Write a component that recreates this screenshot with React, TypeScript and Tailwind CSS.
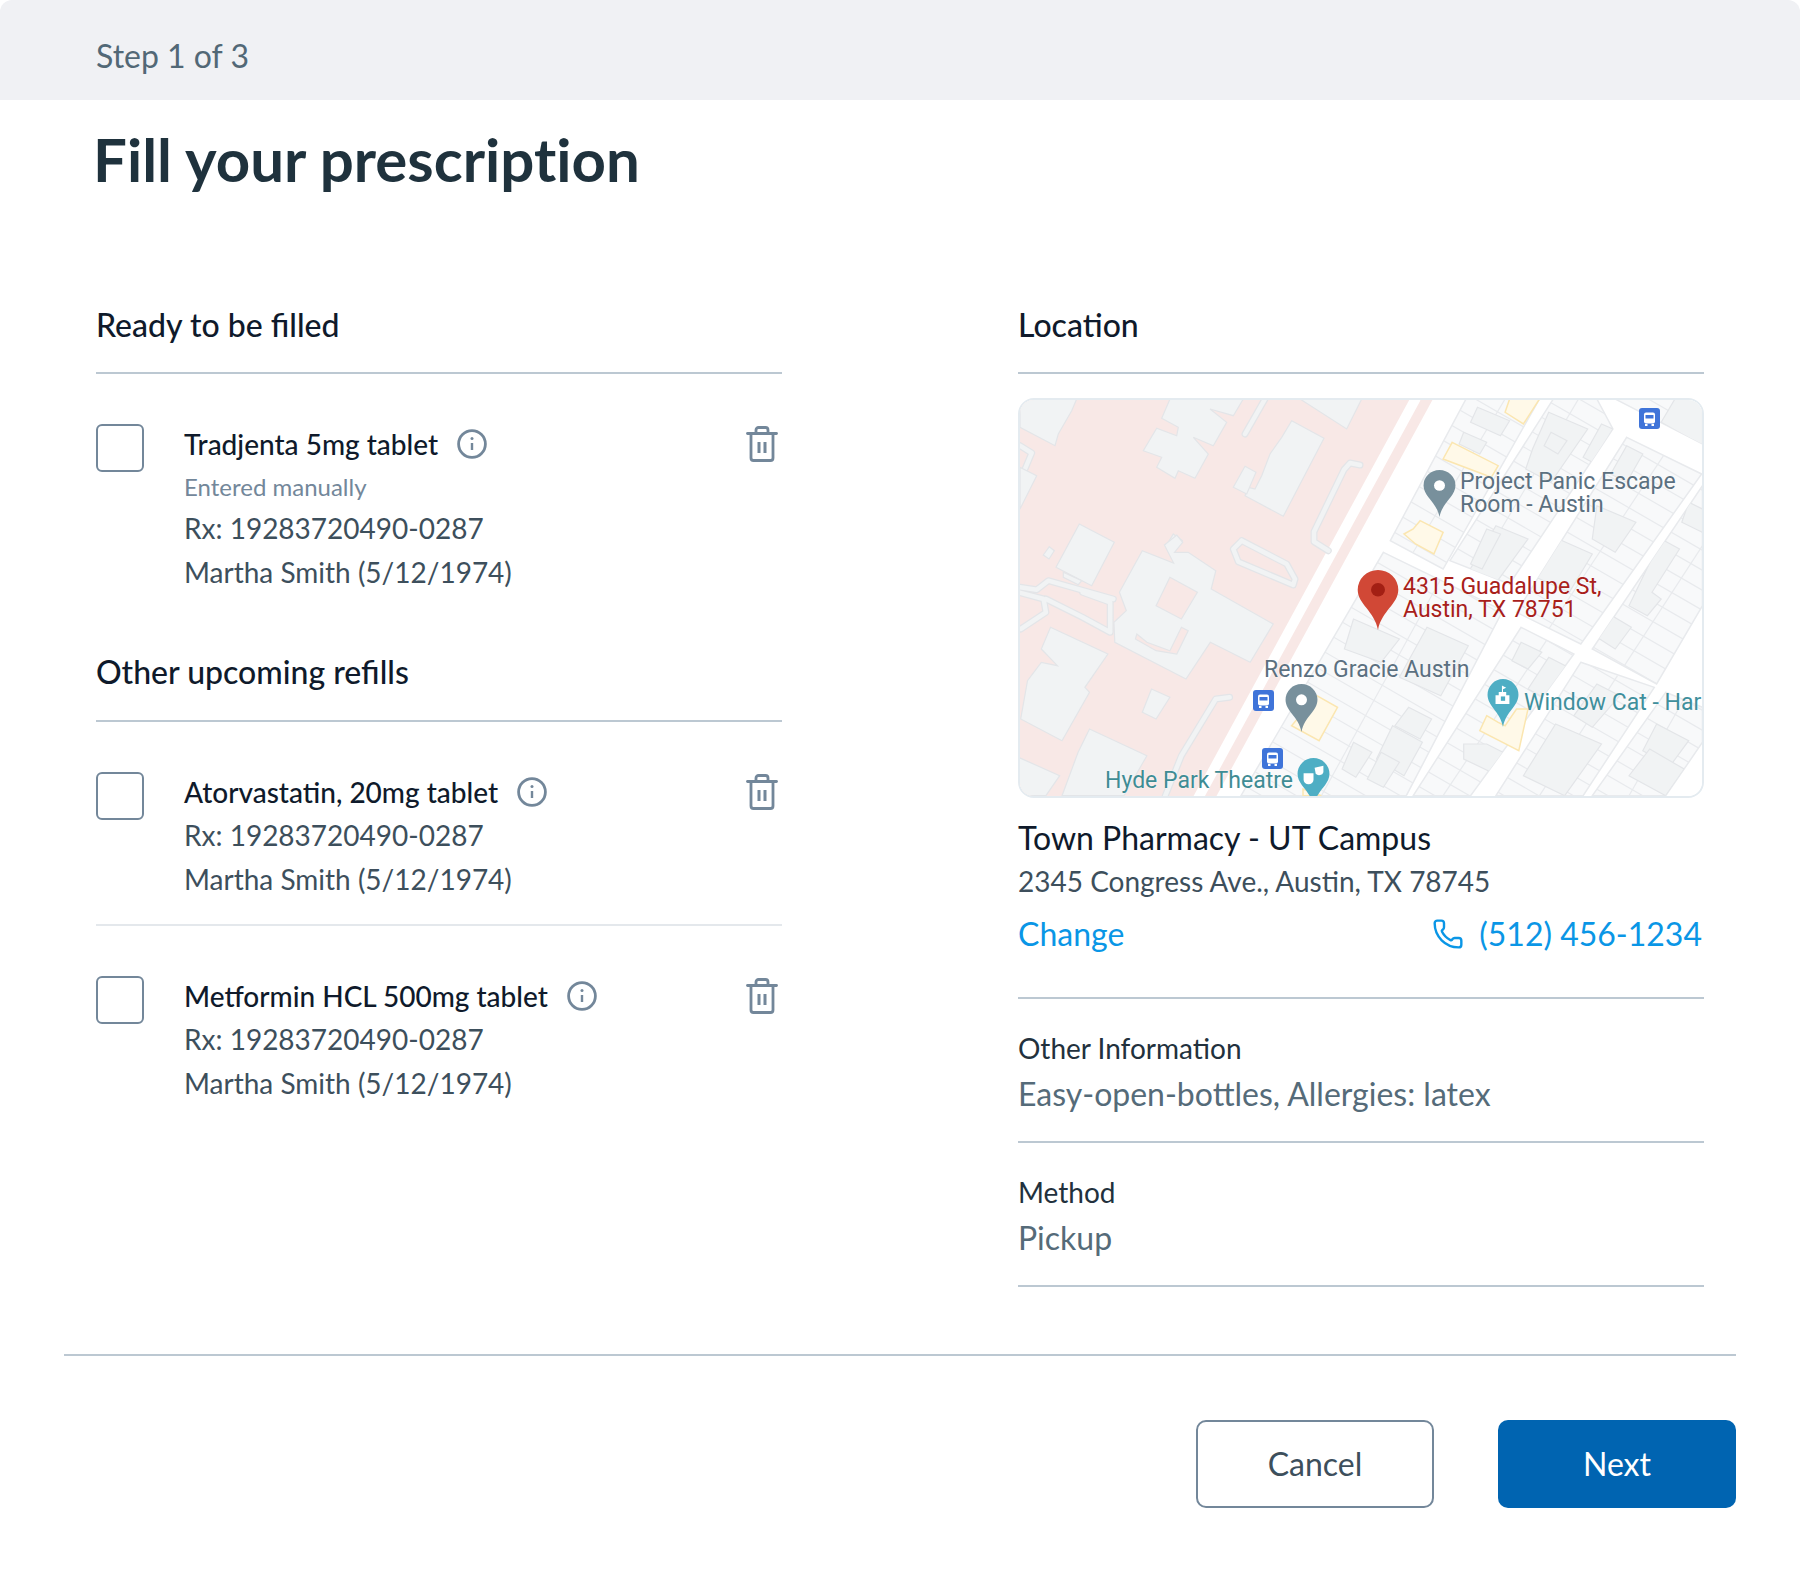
import { Phone } from 'lucide-react';

const rx = 'Rx: 19283720490-0287';
const patient = 'Martha Smith (5/12/1974)';

// crop coordinates -> map pixels
const z1 = (p: number[]) => {
  const out: string[] = [];
  for (let i = 0; i < p.length; i += 2) out.push(`${(p[i] / 2.178 - 20).toFixed(1)},${(p[i + 1] / 3 - 21).toFixed(1)}`);
  return out.join(' ');
};
const z6 = (p: number[]) => {
  const out: string[] = [];
  for (let i = 0; i < p.length; i += 2) out.push(`${(p[i] / 3 - 20).toFixed(1)},${(p[i + 1] / 3 - 21).toFixed(1)}`);
  return out.join(' ');
};

const campus = [
  z6([60, 60, 230, 60, 215, 95, 175, 165, 165, 200, 60, 145]),
  z6([510, 60, 730, 60, 700, 110, 630, 90, 680, 130, 640, 200, 580, 175, 625, 225, 585, 298, 535, 275, 525, 298, 470, 265, 485, 235, 430, 215, 470, 148, 530, 170, 535, 145, 485, 118]),
  z6([875, 125, 972, 178, 850, 412, 735, 350, 745, 325, 765, 330, 785, 290, 810, 225, 845, 175]),
  z6([735, 262, 768, 280, 740, 345, 700, 325]),
  z6([900, 60, 1085, 60, 1040, 150]),
  z6([60, 265, 110, 290, 60, 390]),
  z6([238, 435, 343, 490, 275, 620, 168, 565]),
  z6([148, 503, 163, 515, 147, 540, 130, 528]),
  z6([190, 580, 245, 605, 235, 617, 190, 595]),
  z6([520, 465, 547, 485, 530, 505, 505, 490]),
  z1([310, 515, 378, 552, 358, 498, 385, 468, 398, 490, 380, 520, 410, 520, 470, 575, 460, 630, 595, 735, 545, 850, 458, 790, 405, 900, 250, 790, 248, 730, 275, 695, 260, 640]),
  z1([110, 745, 235, 825, 185, 925, 195, 940, 135, 1085, 45, 1020, 60, 905, 90, 850, 125, 860, 90, 810]),
  z1([330, 930, 370, 955, 340, 1020, 310, 1000]),
  z1([195, 1050, 320, 1130, 270, 1250, 135, 1250, 170, 1120]),
  z1([40, 1135, 130, 1190, 100, 1250, 40, 1250]),
];

const campusHoles = [
  z1([370, 595, 430, 640, 395, 720, 340, 680]),
  z1([298, 765, 320, 790, 370, 815, 395, 745, 410, 755, 385, 825, 340, 815, 295, 780]),
];

const campusRoads = [
  z6([795, 60, 735, 165]),
  z6([1080, 258, 1050, 252, 1032, 272, 942, 458, 942, 488, 985, 515]),
  z6([725, 485, 860, 555, 885, 600, 880, 618, 715, 548, 700, 510, 725, 485]),
  z6([60, 625, 110, 632, 145, 605, 340, 660]),
  z6([60, 200, 95, 222, 75, 270]),
  z1([40, 640, 95, 660, 100, 700, 45, 750]),
  z1([180, 640, 240, 670, 240, 760, 180, 715, 100, 660]),
  z1([500, 955, 470, 960, 395, 1130, 360, 1250]),
];

const blocks = [
  z1([1015, 60, 1175, 60, 965, 570, 850, 485]),
  z1([1205, 60, 1300, 60, 1335, 150, 1110, 615, 980, 545]),
  z1([1365, 175, 1528, 285, 1265, 795, 1125, 700]),
  z1([1530, 320, 1530, 680, 1430, 915, 1290, 810]),
  z1([835, 520, 1095, 695, 885, 1250, 525, 1250]),
  z1([1135, 745, 1250, 825, 1025, 1250, 900, 1250]),
  z1([1265, 850, 1425, 925, 1270, 1250, 1080, 1250]),
  z1([1450, 940, 1530, 985, 1530, 1090, 1450, 1250, 1290, 1250]),
  z1([1340, 60, 1530, 60, 1530, 195]),
];

const buildings = [
  z1([1040, 85, 1110, 125, 1090, 170, 1025, 130]),
  z1([1010, 160, 1060, 190, 1045, 225, 1000, 195]),
  z1([1195, 100, 1280, 150, 1200, 310, 1145, 270, 1160, 210]),
  z1([1200, 160, 1235, 185, 1215, 225, 1185, 200]),
  z1([1310, 135, 1335, 150, 1290, 250, 1270, 235]),
  z1([1365, 200, 1400, 225, 1365, 310, 1330, 285]),
  z1([1440, 480, 1480, 510, 1420, 640, 1440, 660, 1410, 710, 1370, 680]),
  z1([1320, 700, 1375, 745, 1340, 810, 1295, 770]),
  z1([1300, 380, 1385, 430, 1340, 520, 1290, 480]),
  z1([1080, 440, 1150, 480, 1060, 650, 1005, 615]),
  z1([1060, 450, 1090, 465, 1050, 570, 1025, 555]),
  z1([1200, 470, 1290, 525, 1240, 640, 1160, 590]),
  z1([930, 745, 1020, 800, 960, 950, 870, 895]),
  z1([770, 720, 870, 780, 830, 850, 750, 810]),
  z1([890, 985, 940, 1020, 915, 1080, 860, 1040]),
  z1([855, 1040, 920, 1090, 880, 1190, 820, 1140]),
  z1([770, 1090, 810, 1120, 775, 1195, 745, 1170]),
  z1([830, 1120, 870, 1150, 835, 1225, 800, 1200]),
  z1([1195, 835, 1245, 870, 1190, 960, 1150, 930]),
  z1([1135, 790, 1180, 820, 1150, 870, 1115, 845]),
  z1([1210, 1035, 1310, 1095, 1230, 1250, 1140, 1190]),
  z1([1010, 1095, 1060, 1095, 1110, 1130, 1070, 1180, 1010, 1140]),
  z1([1430, 1035, 1500, 1085, 1460, 1160, 1400, 1115]),
  z1([1415, 1110, 1490, 1170, 1450, 1250, 1370, 1190]),
  z1([1300, 915, 1350, 950, 1290, 1045, 1250, 1010]),
  z1([1500, 370, 1530, 390, 1530, 460, 1485, 430]),
  z1([1440, 130, 1530, 200, 1530, 60, 1470, 60]),
];

const yellows = [
  z1([985, 190, 1085, 260, 1070, 295, 965, 240]),
  z1([1110, 60, 1175, 60, 1140, 135, 1100, 100]),
  z1([915, 425, 965, 460, 945, 525, 905, 495, 880, 465, 900, 450]),
  z1([690, 950, 735, 985, 695, 1085, 635, 1040]),
  z1([1060, 1010, 1085, 1030, 1100, 1040, 1125, 990, 1150, 990, 1130, 1115, 1045, 1055]),
  z1([660, 1230, 700, 1250, 660, 1250]),
];

const hatch: string[] = [];
for (let k = -30; k < 30; k++) {
  const y = k * 20;
  hatch.push(`M180 ${y}L760 ${y + 335}`);
}
const hatchLong = [
  z1([1100, 60, 900, 520]),
  z1([1260, 60, 1040, 570]),
  z1([1445, 230, 1195, 750]),
  z1([1530, 500, 1360, 860]),
  z1([960, 600, 700, 1250]),
  z1([1190, 785, 965, 1250]),
  z1([1345, 890, 1175, 1250]),
  z1([1490, 960, 1370, 1250]),
];

function InfoIcon() {
  return (
    <svg width="30" height="30" viewBox="0 0 30 30" fill="none" stroke="#73879a" strokeWidth="2.8">
      <circle cx="15" cy="15" r="13.4" />
      <path d="M15 14v7" strokeWidth="2.4" />
      <circle cx="15" cy="9.5" r="1.5" fill="#73879a" stroke="none" />
    </svg>
  );
}

function TrashIcon() {
  return (
    <svg width="32" height="36" viewBox="0 0 32 36" fill="none" stroke="#73879a" strokeWidth="2.8" strokeLinecap="round">
      <path d="M1.5 7.500h29" />
      <path d="M10 7V4a2.500 2.500 0 0 1 2.500-2.500h7A2.500 2.500 0 0 1 22 4v3" />
      <path d="M5 8v24a2.500 2.500 0 0 0 2.500 2.500h17A2.500 2.500 0 0 0 27 32V8" />
      <path d="M13 16v11M19 16v11" strokeWidth="3" strokeLinecap="butt" />
    </svg>
  );
}

function Med({ name, manual, border }: { name: string; manual?: boolean; border?: boolean }) {
  return (
    <div className={border ? 'flex pt-[48px] pb-[23px] border-b-2 border-[#e4e8ec]' : 'flex pt-[48px] pb-[23px]'}>
      <div className="w-[48px] h-[48px] mt-[2px] rounded-[6px] border-2 border-[#73879a] bg-white shrink-0" />
      <div className="ml-[40px] flex-1">
        <div className="flex items-center h-[44px] text-[28px] font-medium text-[#0f1a2b]">
          <span>{name}</span>
          <span className="ml-[19px] flex"><InfoIcon /></span>
        </div>
        {manual && <div className="text-[24px] leading-[41px] text-[#73879a]">Entered manually</div>}
        <div className="text-[28px] leading-[43.5px] text-[#3d4f5c]">{rx}</div>
        <div className="text-[28px] leading-[43.5px] text-[#3d4f5c]">{patient}</div>
      </div>
      <div className="pt-[4px] pr-[4px]"><TrashIcon /></div>
    </div>
  );
}

function Field({ label, value }: { label: string; value: string }) {
  return (
    <div className="border-b-2 border-[#bcc8d2] pt-[29px] pb-[23px]">
      <div className="text-[28px] leading-[40px] text-[#22313d]">{label}</div>
      <div className="mt-[2px] text-[32px] leading-[48px] text-[#556b79]">{value}</div>
    </div>
  );
}

function MapPin({ color, dot, x, y, w, h, children }: { color: string; dot?: string; x: number; y: number; w: number; h: number; children?: React.ReactNode }) {
  return (
    <svg x={x} y={y} width={w} height={h} viewBox="0 0 30 44" preserveAspectRatio="none">
      <path d="M15 44C12.5 30 0.5 25 0.5 14.5a14.5 14.5 0 0 1 29 0C29.5 25 17.5 30 15 44Z" fill={color} />
      {dot && <circle cx="15" cy="14.5" r="5" fill={dot} />}
      {children}
    </svg>
  );
}

function BusStop({ x, y }: { x: number; y: number }) {
  return (
    <g transform={`translate(${x} ${y})`}>
      <rect width="21" height="21" rx="3" fill="#3f74d9" />
      <rect x="5" y="4.5" width="11" height="11" rx="2" fill="white" />
      <rect x="6.5" y="7" width="8" height="3.5" fill="#3f74d9" />
      <path d="M6 16h2.5v2H6zM12.5 16H15v2h-2.5z" fill="white" />
    </g>
  );
}

function MapView() {
  return (
    <div className="relative w-[686px] h-[400px] rounded-[16px] border-2 border-[#e4ebf0] overflow-hidden bg-white mt-[24px]">
      <svg width="686" height="400" viewBox="0 0 686 400" className="block">
        <defs>
          <clipPath id="blocks">
            {blocks.map((b, i) => <polygon key={i} points={b} />)}
          </clipPath>
        </defs>
        <rect width="686" height="400" fill="#ffffff" />
        <polygon points={z1([40, 55, 945, 55, 470, 1255, 40, 1255])} fill="#f8e8e6" />
        <path d="M396 -2L176 402" stroke="#ffffff" strokeWidth="10" fill="none" />
        <g fill="none" strokeLinejoin="round" strokeLinecap="round">
          {campusRoads.map((r, i) => <polyline key={i} points={r} stroke="#e3e5e8" strokeWidth="7" />)}
          {campusRoads.map((r, i) => <polyline key={i} points={r} stroke="#f1f3f4" strokeWidth="4.5" />)}
        </g>
        <g fill="#f1f3f4" stroke="#e3e5e8" strokeWidth="1.2">
          {campus.map((b, i) => <polygon key={i} points={b} />)}
        </g>
        <g fill="#f8e8e6" stroke="#e3e5e8" strokeWidth="1.2">
          {campusHoles.map((b, i) => <polygon key={i} points={b} />)}
        </g>
        <g fill="#f8f9fa" stroke="#e8eaed" strokeWidth="1.5">
          {blocks.map((b, i) => <polygon key={i} points={b} />)}
        </g>
        <g clipPath="url(#blocks)">
          <path d={hatch.join('')} stroke="#e8eaed" strokeWidth="1.2" fill="none" />
          <g stroke="#e8eaed" strokeWidth="1.2" fill="none">
            {hatchLong.map((l, i) => <polyline key={i} points={l} />)}
          </g>
          <g fill="#f1f3f4" stroke="#e3e5e8" strokeWidth="1.2">
            {buildings.map((b, i) => <polygon key={i} points={b} />)}
          </g>
        </g>
        <g fill="#fff9e8" stroke="#fbe6b0" strokeWidth="1.5">
          {yellows.map((b, i) => <polygon key={i} points={b} />)}
        </g>
      </svg>
      <svg width="686" height="400" viewBox="0 0 686 400" className="absolute left-0 top-0">
        <BusStop x={619} y={8} />
        <BusStop x={233} y={290} />
        <BusStop x={242} y={348} />
        <MapPin color="#78909c" dot="#ffffff" x={403} y={70} w={33} h={47} />
        <MapPin color="#d14836" dot="#a31f14" x={337} y={170} w={42} h={60} />
        <MapPin color="#78909c" dot="#ffffff" x={265} y={284} w={33} h={48} />
        <MapPin color="#4eaec4" x={467} y={279} w={32} h={48}>
          <path d="M8 23v-8h3v-3h3V6l4 2-3 1.500V12h3v3h3v8Z" fill="white" />
          <rect x="13" y="16" width="4" height="4" fill="#4eaec4" />
        </MapPin>
        <MapPin color="#4eaec4" x={277} y={358} w={33} h={48}>
          <path d="M6 14h9v6a4.500 4 0 0 1-9 0Z" fill="white" />
          <path d="M16 9l8-2v6a4 3.500 0 0 1-7 1.500Z" fill="white" />
        </MapPin>
      </svg>
      <div className="absolute left-[440px] top-[70px] text-[23px] leading-[23px] text-[#5b7080] font-['Roboto',sans-serif] [text-shadow:0_0_2px_white]">
        Project Panic Escape<br />Room - Austin
      </div>
      <div className="absolute left-[383px] top-[175px] text-[23px] leading-[23px] text-[#a8201a] font-['Roboto',sans-serif] [text-shadow:0_0_2px_white]">
        4315 Guadalupe St,<br />Austin, TX 78751
      </div>
      <div className="absolute left-[244px] top-[258px] text-[23px] leading-[23px] text-[#5b7080] font-['Roboto',sans-serif] [text-shadow:0_0_2px_white]">Renzo Gracie Austin</div>
      <div className="absolute left-[504px] top-[291px] text-[23px] leading-[23px] text-[#3f8f9c] font-['Roboto',sans-serif] whitespace-nowrap [text-shadow:0_0_2px_white]">Window Cat - Har</div>
      <div className="absolute left-[85px] top-[369px] text-[23px] leading-[23px] text-[#3f8c94] font-['Roboto',sans-serif] [text-shadow:0_0_2px_white]">Hyde Park Theatre</div>
    </div>
  );
}

export default function App() {
  return (
    <div className="w-[1800px] h-[1572px] bg-white font-['Lato',sans-serif] flex flex-col">
      <div className="h-[100px] rounded-t-[12px] bg-[#f0f1f4] pl-[96px] pt-[36px] text-[32px] leading-[40px] text-[#526876]">Step 1 of 3</div>
      <h1 className="pl-[93px] mt-[21px] text-[60px] leading-[76px] font-bold text-[#1f323d] [font-variant-ligatures:none]">Fill your prescription</h1>
      <div className="flex justify-between px-[96px] mt-[106px]">
        <div className="w-[686px]">
          <div className="text-[32px] leading-[44px] font-medium text-[#0f1a2b] pb-[25px] border-b-2 border-[#bcc8d2]">Ready to be filled</div>
          <Med name="Tradjenta 5mg tablet" manual />
          <div className="mt-[33px] text-[32px] leading-[44px] font-medium text-[#0f1a2b] pb-[26px] border-b-2 border-[#bcc8d2]">Other upcoming refills</div>
          <Med name="Atorvastatin, 20mg tablet" border />
          <Med name="Metformin HCL 500mg tablet" />
        </div>
        <div className="w-[686px]">
          <div className="text-[32px] leading-[44px] font-medium text-[#0f1a2b] pb-[25px] border-b-2 border-[#bcc8d2]">Location</div>
          <MapView />
          <div className="border-b-2 border-[#bcc8d2] pb-[37px]">
            <div className="mt-[18px] text-[32px] leading-[44px] text-[#0f1a2b]">Town Pharmacy - UT Campus</div>
            <div className="text-[28px] leading-[43px] text-[#3d4f5c]">2345 Congress Ave., Austin, TX 78745</div>
            <div className="mt-[5px] flex justify-between items-center text-[32px] leading-[52px] text-[#0a96e6]">
              <span>Change</span>
              <span className="flex items-center gap-[15px] pr-[2px]"><Phone size={32} strokeWidth={1.8} />(512) 456-1234</span>
            </div>
          </div>
          <Field label="Other Information" value="Easy-open-bottles, Allergies: latex" />
          <Field label="Method" value="Pickup" />
        </div>
      </div>
      <div className="mx-[64px] mt-[67px] border-t-2 border-[#bcc8d2] flex justify-end gap-[64px] pt-[64px]">
        <button className="w-[238px] h-[88px] rounded-[10px] border-2 border-[#73879a] bg-white text-[32px] text-[#3d4f5c]">Cancel</button>
        <button className="w-[238px] h-[88px] rounded-[10px] bg-[#0064b1] text-[32px] text-white">Next</button>
      </div>
    </div>
  );
}
